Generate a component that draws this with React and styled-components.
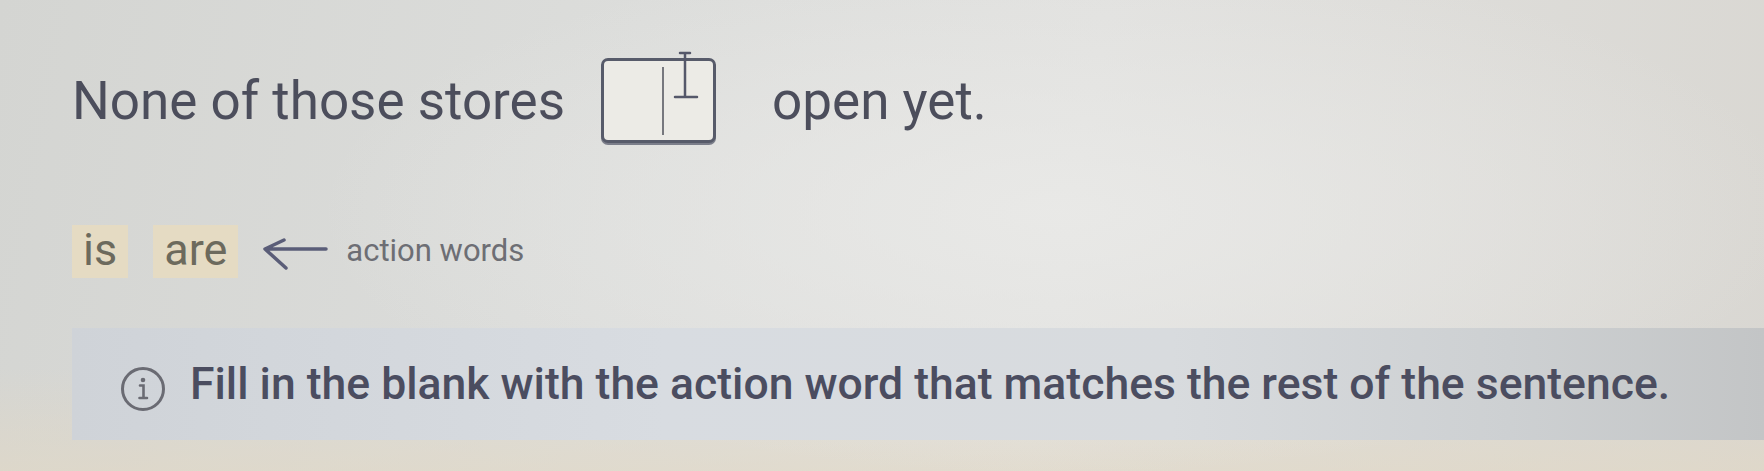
import React from "react";
import styled, { createGlobalStyle } from "styled-components";

const Global = createGlobalStyle`
  html, body {
    margin: 0;
    padding: 0;
    height: 100%;
  }
  body {
    font-family: Roboto, "Noto Sans", "Liberation Sans", sans-serif;
    background: #dcdcd9;
    overflow: hidden;
  }
`;

const Page = styled.div`
  min-height: 471px;
  box-sizing: border-box;
  padding: 58px 0 0 72px;
  display: flex;
  flex-direction: column;
  background:
    radial-gradient(ellipse 60% 80% at 60% 45%, rgba(234, 234, 232, 0.85), rgba(234, 234, 232, 0) 70%),
    linear-gradient(180deg, rgba(0,0,0,0) 78%, rgba(226, 216, 196, 0.6) 100%),
    linear-gradient(100deg, #d4d5d2 0%, #dcdddb 35%, #e1e1df 60%, #d9d7d2 100%);
`;

const SentenceRow = styled.div`
  display: flex;
  align-items: center;
  height: 85px;
`;

const SentenceText = styled.span`
  font-size: 53px;
  font-weight: 400;
  color: #4c4e5c;
  white-space: nowrap;
`;

const Blank = styled.div`
  position: relative;
  box-sizing: border-box;
  width: 115px;
  height: 85px;
  margin: 0 56px 0 36px;
  border: 3px solid #575b6a;
  border-radius: 7px;
  background: #ecebe6;
  box-shadow: 0 2px 0 #7b7e8a;
`;

const Caret = styled.span`
  position: absolute;
  left: 58px;
  top: 6px;
  bottom: 5px;
  width: 2px;
  background: #77787e;
`;

const IBeam = styled.svg`
  position: absolute;
  left: 70px;
  top: -10px;
  width: 26px;
  height: 50px;
  overflow: visible;
`;

const ChipRow = styled.div`
  display: flex;
  align-items: center;
  margin-top: 82px;
  height: 53px;
`;

const Chip = styled.span`
  display: inline-flex;
  align-items: center;
  justify-content: center;
  height: 53px;
  padding: 0 11px 4px;
  margin-right: ${(p) => p.$gap || 0}px;
  background: #e5dbc3;
  color: #6c6a5d;
  font-size: 45px;
  line-height: 1;
  box-sizing: border-box;
`;

const Arrow = styled.svg`
  width: 66px;
  height: 32px;
  margin-left: 24px;
  margin-top: 4px;
  flex: none;
`;

const Label = styled.span`
  margin-left: 18px;
  font-size: 31px;
  color: #6d6e74;
  padding-bottom: 2px;
`;

const Banner = styled.div`
  display: flex;
  align-items: center;
  margin-top: 50px;
  height: 112px;
  padding-left: 48px;
  background: linear-gradient(90deg, #cfd3d8 0%, #d8dce1 35%, #d8dbde 65%, #cdd0d2 85%, #c3c5c6 100%);
`;

const InfoIcon = styled.svg`
  width: 46px;
  height: 46px;
  flex: none;
  margin-top: 10px;
`;

const BannerText = styled.span`
  margin-left: 24px;
  font-size: 44.5px;
  font-weight: 500;
  color: #4b4d60;
  white-space: nowrap;
`;

export default function App() {
  return (
    <>
      <Global />
      <Page>
        <SentenceRow>
          <SentenceText>None of those stores</SentenceText>
          <Blank>
            <Caret />
            <IBeam viewBox="0 0 26 50">
              <path d="M6 2 H16 M11 2 V46 M1 46 H23" stroke="#55586a" strokeWidth="2.5" fill="none" strokeLinecap="round" />
            </IBeam>
          </Blank>
          <SentenceText>open yet.</SentenceText>
        </SentenceRow>

        <ChipRow>
          <Chip $gap={25}>is</Chip>
          <Chip>are</Chip>
          <Arrow viewBox="0 0 66 32">
            <path d="M22 2 L3 11 L24 30 M3 11 H64" stroke="#5a5d78" strokeWidth="3.5" fill="none" strokeLinecap="round" strokeLinejoin="round" />
          </Arrow>
          <Label>action words</Label>
        </ChipRow>

        <Banner>
          <InfoIcon viewBox="0 0 46 46">
            <circle cx="23" cy="23" r="20.5" stroke="#6a6b73" strokeWidth="3" fill="none" />
            <circle cx="23" cy="14" r="2.3" fill="#6a6b73" />
            <path d="M20 19.5 H23.5 V32 M19.5 32 H27" stroke="#6a6b73" strokeWidth="2.6" fill="none" strokeLinecap="round" />
          </InfoIcon>
          <BannerText>Fill in the blank with the action word that matches the rest of the sentence.</BannerText>
        </Banner>
      </Page>
    </>
  );
}
